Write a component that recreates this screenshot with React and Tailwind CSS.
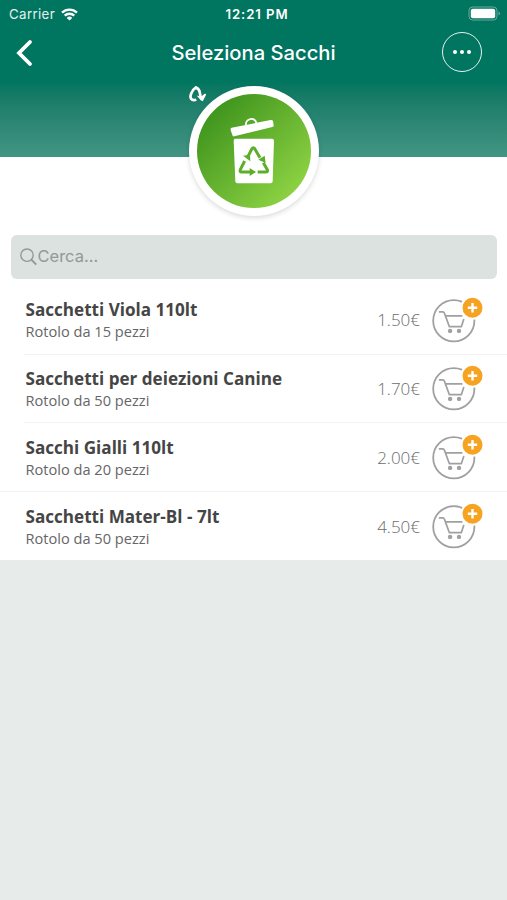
import { useState } from "react";
import clsx from "clsx";

const products = [
  { id: 1, name: "Sacchetti Viola 110lt", detail: "Rotolo da 15 pezzi", price: "1.50€" },
  { id: 2, name: "Sacchetti per deiezioni Canine", detail: "Rotolo da 50 pezzi", price: "1.70€" },
  { id: 3, name: "Sacchi Gialli 110lt", detail: "Rotolo da 20 pezzi", price: "2.00€" },
  { id: 4, name: "Sacchetti Mater-Bl - 7lt", detail: "Rotolo da 50 pezzi", price: "4.50€" },
];

function WifiIcon() {
  return (
    <svg width="17" height="13" viewBox="0 0 17 13" fill="none" stroke="white" strokeWidth="2.3">
      <path d="M1 4.6a10.8 10.8 0 0 1 15 0" />
      <path d="M3.7 7.7a6.9 6.9 0 0 1 9.6 0" />
      <path d="M8.5 12.6 5.7 9.9a4 4 0 0 1 5.6 0Z" fill="white" stroke="none" />
    </svg>
  );
}

function BatteryIcon() {
  return (
    <svg width="33" height="15" viewBox="0 0 33 15" fill="none">
      <rect x="1" y="1" width="28" height="13" rx="3.6" stroke="white" strokeOpacity="0.4" />
      <rect x="2.8" y="2.8" width="24.4" height="9.4" rx="2" fill="white" />
      <path d="M30.6 5.5v4c1.6-.7 1.6-3.3 0-4Z" fill="white" fillOpacity="0.5" />
    </svg>
  );
}

function RecycleBin() {
  return (
    <svg width="48.33" height="69.33" viewBox="168 120 145 208" fill="none">
      <path d="M219 148c-3-22 28-26 31-7" stroke="white" strokeWidth="5.5" />
      <path
        d="M176 155 293 132q6-1 7 4l2 11q1 5-4 6L184 181q-5 1-6-4l-5-15q-1-6 3-7Z"
        fill="white"
      />
      <path
        d="M187 188h110q6 0 6 6l-4 122q0 6-6 6H193q-6 0-6-6l-5-122q0-6 5-6Z"
        fill="white"
      />
      <g stroke="#5dae2a" strokeWidth="9" strokeLinejoin="round">
        <path d="m225 241 12-23q4-6 8 0l16 27" />
        <path d="m271 260 12 21q3 7-5 7h-24" />
        <path d="M236 288h-30q-7 0-4-7l13-26" />
      </g>
      <g fill="#5dae2a">
        <path d="m210 239 21-3 1 20Z" />
        <path d="m256 251 19-12 3 22Z" />
        <path d="m230 276 19 12-19 12Z" />
      </g>
    </svg>
  );
}

function CartIcon() {
  return (
    <svg width="52" height="52" viewBox="0 0 52 52" fill="none">
      <circle cx="22.8" cy="28.8" r="20.6" stroke="#a0a0a0" strokeWidth="1.8" />
      <circle cx="41.5" cy="15.8" r="12" fill="white" />
      <path
        d="M8.5 19.9h3.2q1.3 0 1.7 1.2L18.4 34.7h11.9l2.4-7.2M14.7 23.9h16"
        stroke="#a0a0a0"
        strokeWidth="1.7"
        strokeLinecap="round"
        strokeLinejoin="round"
      />
      <circle cx="19.1" cy="38.9" r="2.2" fill="#a0a0a0" />
      <circle cx="28" cy="38.9" r="2.2" fill="#a0a0a0" />
      <circle cx="41.5" cy="15.8" r="10" fill="#f5a321" />
      <path d="M41.5 11.1v9.4M36.8 15.8h9.4" stroke="white" strokeWidth="2.4" />
    </svg>
  );
}

function ProductRow({ product, divider }) {
  return (
    <li className={clsx("h-[68.8px]", divider === "full" ? "pl-0" : "pl-6")}>
      <div
        className={clsx(
          "flex h-full items-center",
          divider === "none" ? "border-t border-transparent" : "border-t border-[#f1f3f2]",
          divider === "full" ? "pl-[25.5px]" : "pl-[1.5px]"
        )}
      >
        <div className="flex-1 pt-[2px]">
          <h2 className="text-[17.1px] leading-[22px] font-bold text-[#454545]">{product.name}</h2>
          <p className="text-[14.6px] leading-[21px] text-[#666]">{product.detail}</p>
        </div>
        <span className="pt-px text-[17px] font-light text-[#6c6c6c]">{product.price}</span>
        <button className="mr-[24px] mb-[4px] ml-[11px]" aria-label="Aggiungi">
          <CartIcon />
        </button>
      </div>
    </li>
  );
}

export default function App() {
  const [search, setSearch] = useState("");

  return (
    <main className="min-h-screen bg-[#e7ecea] font-['Open_Sans',sans-serif]">
      <header className="h-[157px] bg-linear-to-b from-[#00755f] from-52% to-[#429584] font-['Inter',sans-serif] text-white">
        <div className="grid h-[28px] grid-cols-3 items-center pr-[6px] pl-[9px]">
          <div className="flex items-center gap-[6px] text-[13.3px] text-white/90">
            <span className="pt-px tracking-[0.35px]">Carrier</span>
            <WifiIcon />
          </div>
          <span className="pt-px pl-1 text-center text-[13.2px] font-semibold tracking-[0.9px]">
            12:21 PM
          </span>
          <div className="flex justify-end pb-px">
            <BatteryIcon />
          </div>
        </div>
        <div className="grid h-[50px] grid-cols-[60px_1fr_60px] items-center">
          <button className="pb-px pl-4" aria-label="Indietro">
            <svg width="17" height="28" viewBox="0 0 17 28" fill="none">
              <path d="M14 3 3 14l11 11" stroke="white" strokeWidth="3.8" strokeLinecap="round" />
            </svg>
          </button>
          <h1 className="text-center text-[20.2px] font-medium">Seleziona Sacchi</h1>
          <button
            className="mb-[2px] -ml-[5px] flex size-[40px] items-center justify-center gap-[2.5px] rounded-full border-[1.5px] border-white/90"
            aria-label="Menu"
          >
            <span className="size-[4.5px] rounded-full bg-white" />
            <span className="size-[4.5px] rounded-full bg-white" />
            <span className="size-[4.5px] rounded-full bg-white" />
          </button>
        </div>
        <div className="relative mx-auto mt-[7.5px] flex size-[130px] items-center justify-center rounded-full bg-white shadow-[0_2px_5px_rgba(0,0,0,0.14)]">
          <div className="flex size-[114px] items-center justify-center rounded-full bg-linear-135 from-[#40961e] from-15% to-[#8bd142] to-85%">
            <RecycleBin />
          </div>
          <svg
            className="absolute top-0 left-0"
            width="18"
            height="17"
            viewBox="0 0 18 17"
            fill="none"
          >
            <path
              d="M7.3 13.8C1.8 15.4.6 11.4 2.2 7.4 3.4 4.2 5.2 2.6 7 1.4c2.2 1 3.6 3 3.8 5.2.2 2.4.8 4.4 2 6.4"
              stroke="white"
              strokeWidth="2.7"
            />
            <path d="m7.6 9.6 4.4 1.2 4-3.4 1.2 1.2-3.4 6.6-1.8-.6Z" fill="white" />
          </svg>
        </div>
      </header>

      <section className="bg-white pt-[78px]">
        <label className="mr-[10px] ml-[10.5px] flex h-11 items-center gap-px rounded-md bg-[#dbe2df] pl-[9px] text-[#929997]">
          <svg width="17" height="18" viewBox="0 0 17 18" fill="none" stroke="currentColor">
            <circle cx="7" cy="7.2" r="6.2" strokeWidth="1.4" />
            <path d="m11.4 11.6 4.8 5" strokeWidth="2" />
          </svg>
          <input
            className="flex-1 bg-transparent pb-px font-['Inter',sans-serif] text-[16.5px] outline-none placeholder:text-[#929997]"
            placeholder="Cerca..."
            value={search}
            onChange={(e) => setSearch(e.target.value)}
          />
        </label>
        <ul className="mt-[5.8px]">
          {products.map((product, index) => (
            <ProductRow
              key={product.id}
              product={product}
              divider={index === 0 ? "none" : index === products.length - 1 ? "full" : "inset"}
            />
          ))}
        </ul>
      </section>
    </main>
  );
}
